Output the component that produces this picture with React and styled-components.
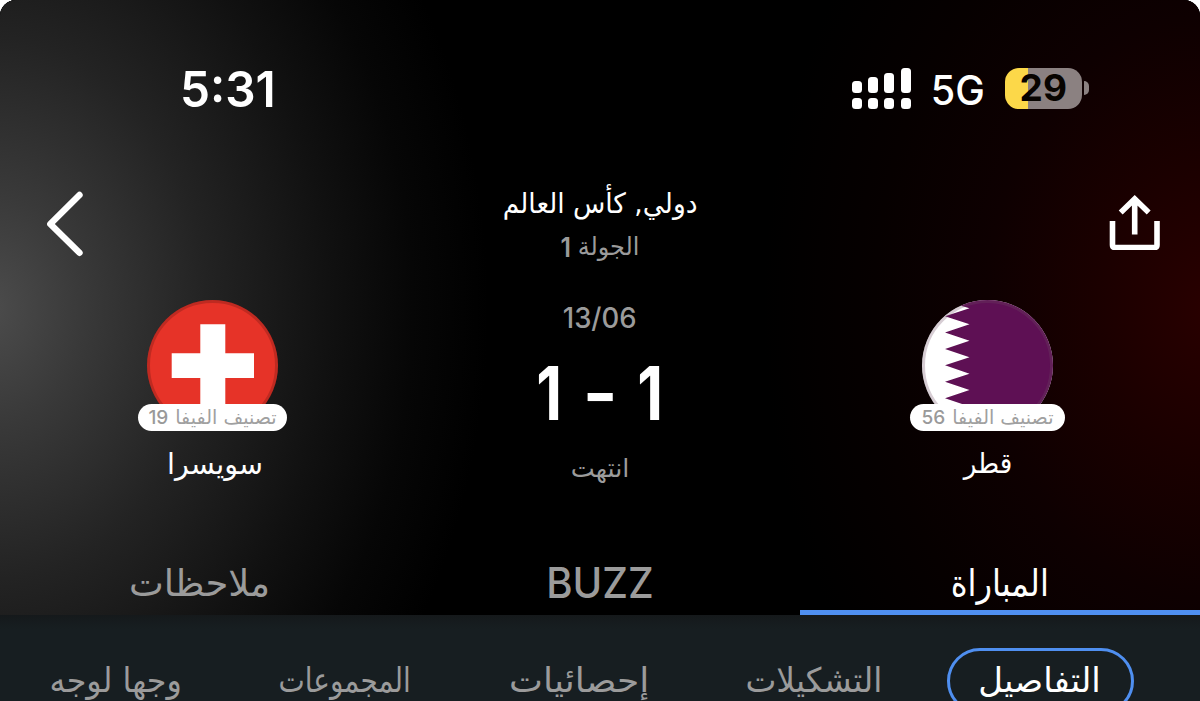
import React from 'react';
import styled, { createGlobalStyle } from 'styled-components';

const Global = createGlobalStyle`
  * { box-sizing: border-box; }
  html, body { margin: 0; background: #fff; }
  body { width: 1200px; height: 701px; overflow: hidden; }
`;

const ARABIC = '"DejaVu Sans", sans-serif';
const LATIN = 'Inter, "Liberation Sans", sans-serif';
const GREY = '#9b9b9b';
const BLUE = '#4f8ff0';

const Screen = styled.main`
  width: 1200px;
  height: 701px;
  display: flex;
  flex-direction: column;
  overflow: hidden;
  border-radius: 16px 16px 0 0;
  background: #171e21;
  color: #fff;
`;

const Hero = styled.section`
  flex: none;
  height: 615px;
  display: flex;
  flex-direction: column;
  background:
    radial-gradient(ellipse 470px 590px at -10px 308px,
      rgba(76, 76, 76, 1) 0%, rgba(57, 57, 57, 1) 20%, rgba(35, 35, 35, 1) 46%,
      rgba(17, 17, 17, 1) 72%, rgba(6, 6, 6, 1) 90%, rgba(0, 0, 0, 0) 106%),
    radial-gradient(ellipse 430px 560px at 1210px 308px,
      #290000 0%, #1b0000 26%, #0e0001 52%, #060000 78%, #000 104%),
    #000;
`;

const Text = styled.span`
  display: block;
  flex: none;
  white-space: nowrap;
  font-family: ${(p) => (p.$latin ? LATIN : ARABIC)};
  font-size: ${(p) => p.$size}px;
  font-weight: ${(p) => p.$weight || 400};
  line-height: ${(p) => (p.$line ? `${p.$line}px` : 1.2)};
  color: ${(p) => p.$color || '#fff'};
  transform: scaleX(${(p) => p.$stretch || 1});
`;

const StatusBar = styled.header`
  height: 134px;
  padding: 43px 111px 0 179px;
  display: flex;
  align-items: center;
  justify-content: space-between;
`;

const Clock = styled(Text)`
  padding-top: 3px;
`;

const Network = styled(Text)`
  padding-top: 4px;
`;

const StatusIcons = styled.div`
  display: flex;
  align-items: center;
`;

const Signal = styled.div`
  display: flex;
  gap: 6.4px;
  height: 41px;
  margin-right: 19px;
`;

const SignalColumn = styled.div`
  width: 10px;
  display: flex;
  flex-direction: column;
  justify-content: flex-end;
  gap: 5px;
`;

const SignalBlock = styled.i`
  height: ${(p) => p.$height}px;
  border-radius: 3.5px;
  background: #fff;
`;

const Battery = styled.div`
  display: flex;
  align-items: center;
  gap: 2px;
  margin-left: 19px;
`;

const BatteryBody = styled.div`
  width: 77.5px;
  height: 41px;
  border-radius: 14px;
  display: flex;
  align-items: center;
  justify-content: center;
  background: linear-gradient(90deg, #fcd849 23px, #8b8181 23px);
`;

const BatteryTip = styled.i`
  width: 5px;
  height: 14px;
  border-radius: 0 7px 7px 0;
  background: #8b8181;
`;

const Match = styled.div`
  height: 421px;
  display: grid;
  grid-template-columns: 46px 333px 1fr 333px 46px;
  direction: ltr;
`;

const IconButton = styled.button`
  border: 0;
  padding: 0;
  background: none;
  height: 66px;
  width: 52px;
  margin-top: ${(p) => p.$top}px;
  margin-right: ${(p) => p.$right || 0}px;
  justify-self: ${(p) => p.$side};
  display: flex;
  align-items: flex-start;
  svg { display: block; flex: none; }
`;

const Center = styled.div`
  padding-top: 49px;
  display: flex;
  flex-direction: column;
  align-items: center;
`;

const Round = styled.div`
  display: flex;
  gap: 6px;
  height: 47px;
`;

const Score = styled.div`
  display: flex;
  align-items: center;
  height: 54px;
  gap: 16.5px;
  margin-right: 1px;
`;

const ScoreDash = styled.span`
  font: 700 78px/54px ${LATIN};
  transform: translate(1px, 0) scale(0.97, 0.88);
`;

const Team = styled.div`
  padding-top: 166px;
  display: flex;
  flex-direction: column;
  align-items: center;
`;

const TeamName = styled(Text)`
  padding: 2px 0 0 ${(p) => p.$shift}px;
`;

const Rank = styled.div`
  position: relative;
  height: 27px;
  width: ${(p) => p.$width}px;
  margin-top: -27px;
  border-radius: 14px;
  background: #fff;
  display: flex;
  align-items: center;
  justify-content: center;
  gap: 7px;
`;

const Tabs = styled.nav`
  height: 60px;
  display: grid;
  grid-template-columns: repeat(3, 1fr);
`;

const Tab = styled.div`
  display: flex;
  justify-content: center;
  padding-top: 3px;
  border-bottom: 5px solid ${(p) => (p.$active ? BLUE : 'transparent')};
`;

const SubTabs = styled.nav`
  flex: 1;
  display: flex;
  direction: rtl;
  gap: 99.5px;
  padding: 33px 66px 0 0;
  background: linear-gradient(#15191b 0, #171e21 14px);
`;

const SubTab = styled.div`
  flex: none;
  width: ${(p) => p.$width}px;
  height: 66px;
  display: flex;
  justify-content: center;
  padding: 0 0 0 2px;
  border: 3px solid transparent;
`;

const ActiveSubTab = styled(SubTab)`
  padding: 0 2px 0 0;
  border-color: ${BLUE};
  border-radius: 33px;
  margin-left: -32.5px;
`;

function SwissFlag() {
  return (
    <svg width="131" height="131" viewBox="0 0 131 131">
      <circle cx="65.5" cy="65.5" r="65.5" fill="#e63328" />
      <circle cx="65.5" cy="65.5" r="64" fill="none" stroke="#000" strokeOpacity=".17" strokeWidth="3" />
      <path d="M53.3 24.3h25v28.9h28.7v24.7H78.3v29H53.3v-29H24.7V53.2h28.6z" fill="#fff" />
    </svg>
  );
}

function QatarFlag() {
  return (
    <svg width="131" height="131" viewBox="0 0 131 131">
      <defs>
        <clipPath id="disc"><circle cx="65.5" cy="65.5" r="65.5" /></clipPath>
      </defs>
      <g clipPath="url(#disc)">
        <path d="M0 0h131v131H0z" fill="#fff" />
        <path d="M38 5.500L47.500 8.300L23 16.300l24.500 8L23 32.500l24.500 8.200L23 49l24.500 8.300L23 65.300l24.500 8.400L23 81.700l24.500 8.300L23 98.300l24.500 8.300L23 115v16h108V-1H38z" fill="#5e1054" />
        <circle cx="65.5" cy="65.5" r="64" fill="none" stroke="#6f4a66" strokeOpacity=".28" strokeWidth="3" />
      </g>
    </svg>
  );
}

const bars = [12, 16, 20, 25];

const subTabs = [
  { label: 'التشكيلات', width: 133.5, stretch: 0.965 },
  { label: 'إحصائيات', width: 138.5, stretch: 1.06 },
  { label: 'المجموعات', width: 130, stretch: 0.82 },
  { label: 'وجها لوجه', width: 129.5, stretch: 0.935 },
];

function TeamBlock({ flag, rank, rankWidth, name, size, stretch, shift }) {
  return (
    <Team>
      {flag}
      <Rank $width={rankWidth}>
        <Text $latin $size={19} $weight={500} $color="#999" $line={27}>{rank}</Text>
        <Text $size={19.1} $color="#a0a0a0" $line={27}>تصنيف الفيفا</Text>
      </Rank>
      <TeamName $size={size} $stretch={stretch} $shift={shift} $line={62}>{name}</TeamName>
    </Team>
  );
}

export default function App() {
  return (
    <>
      <Global />
      <Screen>
        <Hero>
          <StatusBar>
            <Clock $latin $size={48.7} $stretch={0.98} $weight={600}>5:31</Clock>
            <StatusIcons>
              <Signal>
                {bars.map((height) => (
                  <SignalColumn key={height}>
                    <SignalBlock $height={height} />
                    <SignalBlock $height={11} />
                  </SignalColumn>
                ))}
              </Signal>
              <Network $latin $size={40.8} $stretch={0.97} $weight={450}>5G</Network>
              <Battery>
                <BatteryBody>
                  <Text $latin $size={37} $weight={700} $color="#080400">29</Text>
                </BatteryBody>
                <BatteryTip />
              </Battery>
            </StatusIcons>
          </StatusBar>

          <Match>
            <IconButton $top={57} $side="start" aria-label="Back">
              <svg width="90" height="66" viewBox="0 0 90 66" fill="none" stroke="#fff" strokeWidth="6.4" strokeLinecap="round" strokeLinejoin="round">
                <path d="M79.500 4L50.300 33l29.200 28.800" />
              </svg>
            </IconButton>
            <TeamBlock flag={<SwissFlag />} rank="19" rankWidth={149} name="سويسرا" size={29.2} stretch={0.98} shift={5} />
            <Center>
              <Text $size={28} $stretch={0.945} $line={41}>دولي, كأس العالم</Text>
              <Round>
                <Text $latin $size={27.500} $stretch={0.9} $weight={600} $color={GREY} $line={47}>1</Text>
                <Text $size={24.4} $stretch={0.98} $color={GREY} $line={46}>الجولة</Text>
              </Round>
              <Text $latin $size={28} $stretch={0.98} $weight={500} $color={GREY} $line={95}>13/06</Text>
              <Score>
                <Text $latin $size={74.700} $weight={700} $line={52} $stretch={0.8}>1</Text>
                <ScoreDash>-</ScoreDash>
                <Text $latin $size={74.700} $weight={700} $line={52} $stretch={0.8}>1</Text>
              </Score>
              <Text $size={25.500} $color={GREY} $line={97}>انتهت</Text>
            </Center>
            <TeamBlock flag={<QatarFlag />} rank="56" rankWidth={155} name="قطر" size={28.200} stretch={0.93} shift={1} />
            <IconButton $top={58} $side="end" $right={39} aria-label="Share">
              <svg width="52" height="58" viewBox="0 0 52 58" fill="none" stroke="#fff" strokeWidth="5.600">
                <path d="M3.500 29v24q0 2.500 2.500 2.500h39.500q2.500 0 2.500-2.500V29M25.700 42.500V8M11.700 20.500L25.700 7l14 13.500" />
              </svg>
            </IconButton>
          </Match>

          <Tabs>
            <Tab><Text $size={37.500} $stretch={0.985} $color={GREY} $line={51}>ملاحظات</Text></Tab>
            <Tab><Text $latin $size={41.800} $stretch={0.96} $weight={550} $color={GREY} $line={51}>BUZZ</Text></Tab>
            <Tab $active><Text $size={37.200} $stretch={0.865} $line={51}>المباراة</Text></Tab>
          </Tabs>
        </Hero>

        <SubTabs>
          <ActiveSubTab $width={187}>
            <Text $size={34} $stretch={1} $line={58}>التفاصيل</Text>
          </ActiveSubTab>
          {subTabs.map(({ label, width, stretch }) => (
            <SubTab key={label} $width={width}>
              <Text $size={34} $stretch={stretch} $color={GREY} $line={58}>{label}</Text>
            </SubTab>
          ))}
        </SubTabs>
      </Screen>
    </>
  );
}
